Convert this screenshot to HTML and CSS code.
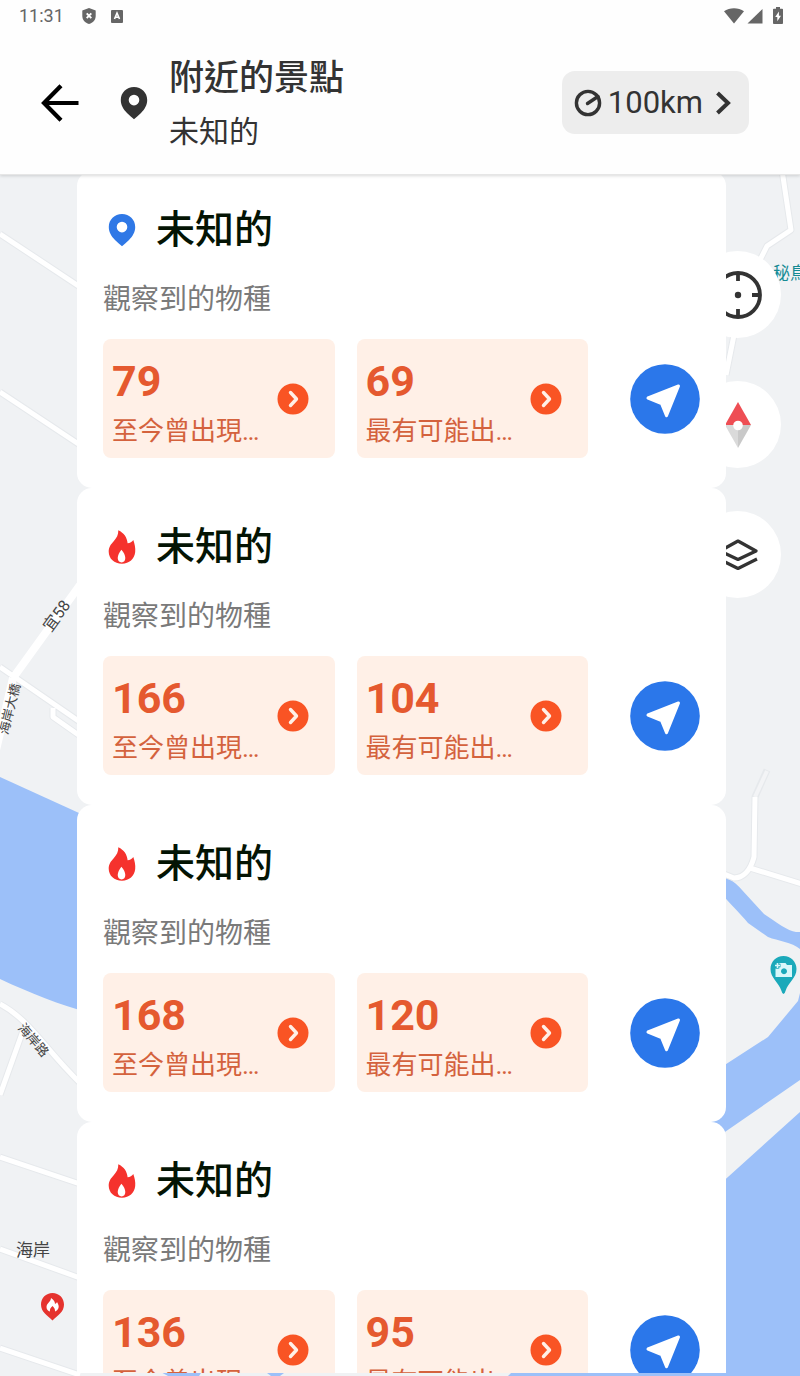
FILE: index.html
```html
<!DOCTYPE html>
<html lang="zh-Hant">
<head>
<meta charset="utf-8">
<meta name="viewport" content="width=device-width, initial-scale=1">
<title>附近的景點</title>
<link rel="stylesheet" href="styles.css">
</head>
<body>
<svg class="sprite" aria-hidden="true">
  <symbol id="pin" viewBox="0 0 28 34"><path fill="currentColor" fill-rule="evenodd" d="M14 1C6.500 1 .8 6.700 .8 13.900c0 5.200 2.600 9.300 6.200 13 2.300 2.400 4.700 4.500 7 6.300 2.300-1.800 4.700-3.900 7-6.300 3.600-3.700 6.200-7.800 6.200-13C27.200 6.700 21.500 1 14 1zm0 7.800a5.300 5.300 0 1 1 0 10.600 5.300 5.300 0 0 1 0-10.600z"/></symbol>
  <symbol id="fire" viewBox="0 0 28 34"><path fill="#f5322d" d="M10.300.3c5.800 2.800 8.800 7.200 9.300 12.900 2.400-.2 4.500-1.300 5.700-3.200 1.400 4 2.300 8 1.900 12-.7 7-6 11.700-13.200 11.700C6.300 33.700.8 28.900.7 21.800.6 17 3 14.100 5.900 10.900 8.700 7.800 10.400 5 10.300.3z"/><path fill="#fff" d="M13.400 19.700c2.300 2.700 3.900 5.400 3.900 8.400 0 2.700-1.400 4.400-3.700 4.400s-3.900-1.700-3.900-4.400c0-3 1.700-5.700 3.700-8.400z"/></symbol>
  <symbol id="go" viewBox="0 0 32 32"><circle cx="16" cy="16" r="15.500" fill="#f95424"/><path d="M13.500 9.500l6 6.500-6 6.500" fill="none" stroke="#fff0e7" stroke-width="3.400" stroke-linecap="round" stroke-linejoin="round"/></symbol>
  <symbol id="nav" viewBox="0 0 70 70"><circle cx="35" cy="35" r="34.800" fill="#2b77ea"/><path d="M48.500 22L36.500 51.800 31.500 39.500 18 34z" fill="#fff" stroke="#fff" stroke-width="3" stroke-linejoin="round"/></symbol>
</svg>

<header class="top">
  <div class="status">
    <time>11:31</time>
    <svg width="14" height="16" viewBox="0 0 14 16"><path fill="#666" d="M7 0l6.700 2.500v5.200C13.700 12 11 14.700 7 16 3 14.700.3 12 .3 7.700V2.500z"/><path d="M4.700 5.300l4.600 4.900m0-4.900l-4.600 4.900" stroke="#fff" stroke-width="1.900"/></svg>
    <svg width="12" height="14" viewBox="0 0 12 14"><rect width="12" height="13" y="1" rx="1" fill="#666"/><path d="M3.500 10L6 4l2.500 6M4.400 8.200h3.200" fill="none" stroke="#fff" stroke-width="1.600"/></svg>
    <div class="system">
      <svg width="20" height="16" viewBox="0 0 20 16"><path fill="#666" d="M10 15.500L0 3.200C5.500-.9 14.500-.9 20 3.200z"/></svg>
      <svg width="16" height="16" viewBox="0 0 16 16"><path fill="#666" d="M15.500 1v14.500H.5z"/></svg>
      <svg class="battery" width="10" height="17" viewBox="0 0 10 17"><path fill="#666" d="M3 0h4v1.800h2.200c.5 0 .8.300.8.800V16c0 .600-.300 1-.8 1H.8C.3 17 0 16.600 0 16V2.600c0-.5.3-.8.800-.8H3z"/><path fill="#fff" d="M5.900 4.500L2.200 10h2.100v4.300L8 8.700H5.900z"/></svg>
    </div>
  </div>
  <div class="bar">
    <button class="back" type="button" aria-label="返回"><svg width="38" height="38" viewBox="0 0 38 38"><path d="M37.500 19H4M20 1.700L3 19l17 17.300" fill="none" stroke="#000" stroke-width="4.200"/></svg></button>
    <svg class="place" width="28" height="34"><use href="#pin"/></svg>
    <div class="heading"><h1>附近的景點</h1><p>未知的</p></div>
    <button class="range" type="button">
      <svg width="28" height="28" viewBox="0 0 28 28" fill="none" stroke="#333" stroke-width="3.400"><circle cx="14" cy="14" r="11.600"/><path d="M13.500 14.500l10.500-7"  stroke-linecap="round"/></svg>
      <span>100km</span>
      <svg class="chevron" width="16" height="24" viewBox="0 0 16 24"><path d="M2.500 2l10.500 10L2.500 22" fill="none" stroke="#333" stroke-width="4"/></svg>
    </button>
  </div>
</header>

<main class="stage">
  <svg class="map" viewBox="0 175 800 1201" preserveAspectRatio="xMidYMin slice" aria-hidden="true">
    <rect y="175" width="800" height="1201" fill="#f0f2f4"/>
    <g fill="#9cc0f9">
      <path d="M0 777L90 818V1013C60 1005 30 993 0 979z"/>
      <path d="M720 874c12 6 16 9 22 16l22 24c12 8 24 17 32 18h4v17c-8-7-22-8-32-12l-20-14c-8-10-18-19-28-31z"/>
      <path d="M720 1068l48-31 30-36 2-8v87l-78 54-20-12z"/>
      <path d="M800 1112v264H508l10-10h190V1195z"/>
      <path d="M157 1370h131l-8 6H168z"/>
    </g>
    <path d="M203 1370h60l8 6h-72z" fill="#eff2f4"/>
    <g fill="none" stroke="#e6e9ec" stroke-width="7" stroke-linejoin="round">
      <path d="M0 234l80 53M0 392l80 53M0 667l80 55M53 708v9l27 19M0 1004c30 16 45 45 80 79M24 1028L0 1095M0 1157l80 27M0 1249l80 29M0 1348l80 27M782 170l9 60-24 16-10 20M735 330l-9 45M767 770l-12 27-1 60c-4 15-12 21-20 21l-10-4M750 868l55 17"/>
    </g>
    <path d="M767 771l-12 26" stroke="#f3f4f6" stroke-width="4"/>
    <g fill="none" stroke="#fff" stroke-width="5" stroke-linejoin="round">
      <path d="M0 234l80 53M0 392l80 53M0 667l80 55M53 708v9l27 19M0 1004c30 16 45 45 80 79M24 1028L0 1095M0 1157l80 27M0 1249l80 29M0 1348l80 27M782 170l9 60-24 16-10 20M735 330l-9 45M755 797l-1 60c-4 15-12 21-20 21l-10-4M750 868l55 17"/>
      <path d="M13 678l67-93M13 678L-4 750" stroke-width="8"/>
    </g>
    <g class="map-label">
      <text transform="translate(61 619) rotate(-54)" text-anchor="middle" font-size="16">宜58</text>
      <text transform="translate(14 710) rotate(-76)" text-anchor="middle" font-size="13">海岸大橋</text>
      <text transform="translate(30 1043) rotate(49)" text-anchor="middle" font-size="13">海岸路</text>
      <text x="16" y="1256" font-size="17">海岸</text>
      <text class="poi" x="773" y="279" font-size="17">秘鳥</text>
    </g>
    <g>
      <path fill="#1ba9ba" d="M783.500 956c7.500 0 13 5.800 13 13 0 9-8 13-11 22q-.8 3-2 3t-2-3c-3-9-11-13-11-22 0-7.200 5.500-13 13-13z"/>
      <path fill="#d9f7fa" fill-rule="evenodd" d="M775.500 968.500h3v-5.500h7l1.500 2h5v12h-16.500zm8.500-.2a3 3 0 1 0 .01 0z"/>
      <path d="M774.500 965.500h6M777.500 962.500v6" stroke="#1ba9ba" stroke-width="3.600"/>
      <path d="M775 965.500h5M777.500 963v5" stroke="#d9f7fa" stroke-width="1.600"/>
    </g>
    <g>
      <path fill="#e5332e" d="M52.500 1293c6.500 0 11.500 5 11.500 11.500 0 7.500-6 10.500-11.500 16-5.500-5.500-11.500-8.500-11.500-16 0-6.500 5-11.500 11.500-11.500z"/>
      <path fill="#fff" d="M51 1298c3 2 4 4 4 6 1-.5 1.500-1 2-2 1.500 2.500 2 4 1.500 6-.7 2-2 3-3.500 3.500.3-2-.8-4-2.500-5.500-1.800 1.500-3 3.500-2.500 5.500-2-.6-3.500-2-3.500-4.500 0-4 4.500-5 4.500-9z"/>
    </g>
  </svg>

  <div class="tools">
    <button type="button" aria-label="定位"><svg width="50" height="50" viewBox="0 0 50 50" fill="none" stroke="#333" stroke-width="3.800"><circle cx="25" cy="25" r="22"/><path d="M25 3v8M25 39v8M3 25h8M39 25h8"/><circle cx="25" cy="25" r="3.200" fill="#333" stroke="none"/></svg></button>
    <button type="button" aria-label="指南針"><svg width="28" height="48" viewBox="0 0 28 48"><path fill="#ee4e54" d="M14 1l13 23H1z"/><path fill="#dadada" d="M1 24h13v23z"/><path fill="#c9c9c9" d="M27 24H14v23z"/><circle cx="14" cy="24.500" r="4.800" fill="#fff"/></svg></button>
    <button type="button" aria-label="圖層"><svg width="40" height="34" viewBox="0 0 40 34" fill="none" stroke="#333" stroke-width="3.200" stroke-linejoin="round"><path d="M20 3l18 10-18 8.500L2 13z"/><path d="M1 21l19 9.500L39 21"/></svg></button>
  </div>

  <section class="list">
    <article class="card">
      <h2><svg class="pin" width="28" height="34"><use href="#pin"/></svg>未知的</h2>
      <p>觀察到的物種</p>
      <div class="row">
        <button class="stat" type="button"><span class="text"><strong>79</strong><span>至今曾出現…</span></span><svg width="32" height="32"><use href="#go"/></svg></button>
        <button class="stat" type="button"><span class="text"><strong>69</strong><span>最有可能出…</span></span><svg width="32" height="32"><use href="#go"/></svg></button>
        <button class="nav" type="button" aria-label="導航"><svg width="70" height="70"><use href="#nav"/></svg></button>
      </div>
    </article>
    <article class="card">
      <h2><svg width="28" height="34"><use href="#fire"/></svg>未知的</h2>
      <p>觀察到的物種</p>
      <div class="row">
        <button class="stat" type="button"><span class="text"><strong>166</strong><span>至今曾出現…</span></span><svg width="32" height="32"><use href="#go"/></svg></button>
        <button class="stat" type="button"><span class="text"><strong>104</strong><span>最有可能出…</span></span><svg width="32" height="32"><use href="#go"/></svg></button>
        <button class="nav" type="button" aria-label="導航"><svg width="70" height="70"><use href="#nav"/></svg></button>
      </div>
    </article>
    <article class="card">
      <h2><svg width="28" height="34"><use href="#fire"/></svg>未知的</h2>
      <p>觀察到的物種</p>
      <div class="row">
        <button class="stat" type="button"><span class="text"><strong>168</strong><span>至今曾出現…</span></span><svg width="32" height="32"><use href="#go"/></svg></button>
        <button class="stat" type="button"><span class="text"><strong>120</strong><span>最有可能出…</span></span><svg width="32" height="32"><use href="#go"/></svg></button>
        <button class="nav" type="button" aria-label="導航"><svg width="70" height="70"><use href="#nav"/></svg></button>
      </div>
    </article>
    <article class="card">
      <h2><svg width="28" height="34"><use href="#fire"/></svg>未知的</h2>
      <p>觀察到的物種</p>
      <div class="row">
        <button class="stat" type="button"><span class="text"><strong>136</strong><span>至今曾出現…</span></span><svg width="32" height="32"><use href="#go"/></svg></button>
        <button class="stat" type="button"><span class="text"><strong>95</strong><span>最有可能出…</span></span><svg width="32" height="32"><use href="#go"/></svg></button>
        <button class="nav" type="button" aria-label="導航"><svg width="70" height="70"><use href="#nav"/></svg></button>
      </div>
    </article>
  </section>
</main>
</body>
</html>
```
FILE: styles.css
```css
* { box-sizing: border-box; }

body {
  margin: 0;
  height: 100vh;
  display: flex;
  flex-direction: column;
  overflow: hidden;
  background: #fff;
  color: #333;
  font-family: Roboto, "Noto Sans CJK TC", sans-serif;
}

h1, h2, p { margin: 0; }
svg { display: block; flex: none; }
.sprite { position: absolute; width: 0; height: 0; }

button {
  border: 0;
  padding: 0;
  background: none;
  color: inherit;
  font: inherit;
  text-align: left;
  cursor: pointer;
}

.top {
  position: relative;
  z-index: 2;
  border-bottom: 1px solid #e6e6e6;
  background: #fefefe;
  box-shadow: 0 1px 3px rgba(0, 0, 0, 0.15);
}

.status {
  display: flex;
  align-items: center;
  height: 31px;
  padding: 0 17px 0 19px;
  color: #666;
  font-size: 18px;
}
.status time { margin-right: 18px; }
.status svg + svg { margin-left: 15px; }
.system { display: flex; align-items: center; margin-left: auto; }
.system svg + svg { margin-left: 3px; }
.system svg.battery { margin-left: 10px; }

.bar {
  display: flex;
  align-items: center;
  height: 143px;
  padding: 0 51px 0 41px;
}
.place { margin: 0 21px 0 41px; }
.heading { flex: 1; padding-top: 7px; }
.heading h1 { font-size: 35px; line-height: 52px; font-weight: 500; }
.heading p { font-size: 30px; line-height: 54px; }

.range {
  display: flex;
  align-items: center;
  height: 63px;
  padding: 0 18px 0 12px;
  border-radius: 13px;
  background: #ededed;
  font-size: 31px;
}
.range span { margin: 0 12px 0 6px; }

.stage {
  position: relative;
  flex: 1;
  min-height: 0;
  display: flex;
  flex-direction: column;
  overflow: hidden;
}
.map { position: absolute; inset: 0; width: 100%; height: 100%; }
.map-label { fill: #444; }
.map-label .poi { fill: #168b94; }

.tools {
  position: absolute;
  top: 76px;
  right: 19px;
  display: grid;
  gap: 43px;
}
.tools button {
  display: grid;
  place-items: center;
  width: 87px;
  height: 87px;
  border-radius: 50%;
  background: #fff;
}

.list {
  position: relative;
  flex: 1;
  min-height: 0;
  margin: -4px 74px 3px 77px;
  overflow-y: auto;
  scrollbar-width: none;
}

.card {
  padding: 29px 26px 30px;
  border-radius: 15px;
  background: #fff;
}
.card h2 {
  display: flex;
  align-items: center;
  gap: 20px;
  padding-left: 5px;
  color: #041404;
  font-size: 39px;
  line-height: 60px;
  font-weight: 500;
}
.card .pin { color: #2f78e6; }
.card p {
  margin: 20px 0 19px;
  color: #7a7a7a;
  font-size: 28px;
  line-height: 40px;
}

.row { display: flex; align-items: center; gap: 22px; }
.stat {
  flex: 1;
  min-width: 0;
  display: flex;
  align-items: center;
  justify-content: space-between;
  padding: 0 26px 0 9px;
  border-radius: 8px;
  background: #fff0e7;
  color: #e5592f;
}
.stat .text { display: grid; gap: 6px; padding: 18px 0 7px; }
.stat strong { font-size: 43px; line-height: 48px; font-weight: 700; }
.stat .text span { color: #d4623d; font-size: 26px; line-height: 40px; white-space: nowrap; }
.nav { margin-left: 20px; }
```
